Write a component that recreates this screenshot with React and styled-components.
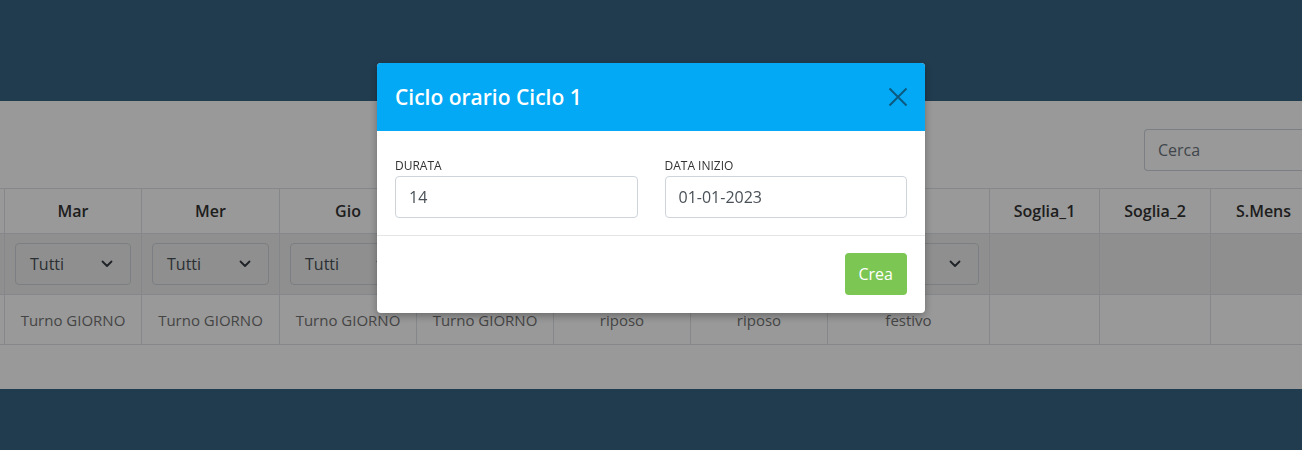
import React, { useLayoutEffect, useRef } from "react";
import styled, { createGlobalStyle } from "styled-components";

const GlobalStyle = createGlobalStyle`
  html, body {
    margin: 0;
    padding: 0;
    height: 100%;
  }
  body {
    font-family: "Open Sans", "Liberation Sans", sans-serif;
    background-color: #376484;
    color: #333;
  }
  * {
    box-sizing: border-box;
  }
`;

const Page = styled.div`
  display: flex;
  flex-direction: column;
  height: 450px;
  padding-top: 101px;
  background-color: #376484;
  overflow: hidden;
`;

const Card = styled.section`
  height: 288px;
  background-color: #ffffff;
`;

const Scroller = styled.div`
  overflow: hidden;
  width: 100%;
`;

const Inner = styled.div`
  width: 1449px;
`;

const Toolbar = styled.div`
  display: flex;
  justify-content: flex-end;
  padding-top: 28px;
  margin-bottom: 17px;
`;

const SearchInput = styled.input`
  width: 172px;
  height: 42px;
  padding: 0 13px;
  font-family: inherit;
  font-size: 16px;
  color: #495057;
  border: 1px solid #ced4da;
  border-right: none;
  border-radius: 4px 0 0 4px;
  outline: none;
  &::placeholder {
    color: #6c757d;
  }
`;

const Table = styled.table`
  width: 1449px;
  table-layout: fixed;
  border-collapse: collapse;
  th, td {
    border: 1px solid #dee2e6;
    text-align: center;
    vertical-align: middle;
  }
`;

const HeadCell = styled.th`
  height: 45px;
  padding: 0;
  font-size: 16px;
  font-weight: 600;
  color: #333;
`;

const FilterRow = styled.tr`
  background-color: #eeeeee;
`;

const FilterCell = styled.td`
  height: 61px;
  padding: 0 10px;
`;

const Select = styled.div`
  display: flex;
  align-items: center;
  justify-content: space-between;
  height: 42px;
  padding: 0 14px;
  background-color: #eeeeee;
  border: 1px solid #ced4da;
  border-radius: 4px;
  font-size: 16px;
  color: #495057;
  svg {
    margin-right: 3px;
  }
`;

const DataCell = styled.td`
  height: 50px;
  padding: 1px 4px 0;
  font-size: 15px;
  color: #737373;
  white-space: nowrap;
`;

const Backdrop = styled.div`
  position: fixed;
  inset: 0;
  display: flex;
  justify-content: center;
  align-items: flex-start;
  padding-top: 63px;
  background-color: rgba(0, 0, 0, 0.4);
`;

const Modal = styled.div`
  width: 548px;
  background-color: #ffffff;
  border-radius: 4px;
  overflow: hidden;
  box-shadow: 0 3px 9px rgba(0, 0, 0, 0.3);
`;

const ModalHeader = styled.header`
  display: flex;
  align-items: center;
  justify-content: space-between;
  height: 68px;
  padding: 0 17px 0 18px;
  background-color: #03a9f4;
`;

const ModalTitle = styled.h4`
  margin: 0;
  font-size: 21px;
  font-weight: 600;
  color: #ffffff;
`;

const CloseButton = styled.button`
  display: flex;
  padding: 0;
  border: none;
  background: none;
  cursor: pointer;
`;

const ModalBody = styled.div`
  display: grid;
  grid-template-columns: 1fr 1fr;
  column-gap: 27px;
  padding: 26px 18px 17px;
  border-bottom: 1px solid #e5e5e5;
`;

const Field = styled.div`
  display: flex;
  flex-direction: column;
`;

const Label = styled.label`
  font-size: 12px;
  line-height: 18px;
  margin-bottom: 1px;
  text-transform: uppercase;
  color: #333;
`;

const TextInput = styled.input`
  height: 42px;
  padding: 0 13px;
  font-family: inherit;
  font-size: 16px;
  color: #495057;
  border: 1px solid #ced4da;
  border-radius: 4px;
  outline: none;
`;

const ModalFooter = styled.footer`
  display: flex;
  justify-content: flex-end;
  padding: 17px 18px 18px;
`;

const Button = styled.button`
  height: 42px;
  padding: 0 14px;
  font-family: inherit;
  font-size: 16px;
  color: #ffffff;
  background-color: #7cc653;
  border: none;
  border-radius: 4px;
  cursor: pointer;
`;

const columns = [
  { key: "lun", label: "Lun", width: 137, filter: true, value: "Turno GIORNO" },
  { key: "mar", label: "Mar", width: 137, filter: true, value: "Turno GIORNO" },
  { key: "mer", label: "Mer", width: 138, filter: true, value: "Turno GIORNO" },
  { key: "gio", label: "Gio", width: 137, filter: true, value: "Turno GIORNO" },
  { key: "ven", label: "Ven", width: 137, filter: true, value: "Turno GIORNO" },
  { key: "sab", label: "Sab", width: 137, filter: true, value: "riposo" },
  { key: "dom", label: "Dom", width: 137, filter: true, value: "riposo" },
  { key: "fest", label: "Fest", width: 162, filter: true, value: "festivo" },
  { key: "s1", label: "Soglia_1", width: 110 },
  { key: "s2", label: "Soglia_2", width: 111 },
  { key: "smens", label: "S.Mens", width: 106 },
];

const Chevron = () => (
  <svg width="12" height="8" viewBox="0 0 12 8" fill="none">
    <path d="M1.5 1.5L6 6l4.5-4.5" stroke="#343a40" strokeWidth="1.8" strokeLinecap="round" strokeLinejoin="round" />
  </svg>
);

const CloseIcon = () => (
  <svg width="20" height="20" viewBox="0 0 20 20" fill="none">
    <path d="M1.5 1.5l17 17M18.5 1.5l-17 17" stroke="#0d5a80" strokeWidth="2" />
  </svg>
);

const App = () => {
  const scrollRef = useRef(null);

  useLayoutEffect(() => {
    if (scrollRef.current) scrollRef.current.scrollLeft = 133;
  }, []);

  return (
    <>
      <GlobalStyle />
      <Page>
        <Card>
          <Scroller ref={scrollRef}>
            <Inner>
              <Toolbar>
                <SearchInput placeholder="Cerca" />
              </Toolbar>
              <Table>
                <colgroup>
                  {columns.map((c) => (
                    <col key={c.key} style={{ width: c.width }} />
                  ))}
                </colgroup>
                <thead>
                  <tr>
                    {columns.map((c) => (
                      <HeadCell key={c.key}>{c.label}</HeadCell>
                    ))}
                  </tr>
                  <FilterRow>
                    {columns.map((c) => (
                      <FilterCell key={c.key}>
                        {c.filter && (
                          <Select>
                            Tutti
                            <Chevron />
                          </Select>
                        )}
                      </FilterCell>
                    ))}
                  </FilterRow>
                </thead>
                <tbody>
                  <tr>
                    {columns.map((c) => (
                      <DataCell key={c.key}>{c.value || ""}</DataCell>
                    ))}
                  </tr>
                </tbody>
              </Table>
            </Inner>
          </Scroller>
        </Card>
      </Page>

      <Backdrop>
        <Modal>
          <ModalHeader>
            <ModalTitle>Ciclo orario Ciclo 1</ModalTitle>
            <CloseButton aria-label="Chiudi">
              <CloseIcon />
            </CloseButton>
          </ModalHeader>
          <ModalBody>
            <Field>
              <Label htmlFor="durata">Durata</Label>
              <TextInput id="durata" defaultValue="14" />
            </Field>
            <Field>
              <Label htmlFor="inizio">Data inizio</Label>
              <TextInput id="inizio" defaultValue="01-01-2023" />
            </Field>
          </ModalBody>
          <ModalFooter>
            <Button>Crea</Button>
          </ModalFooter>
        </Modal>
      </Backdrop>
    </>
  );
};

export default App;
